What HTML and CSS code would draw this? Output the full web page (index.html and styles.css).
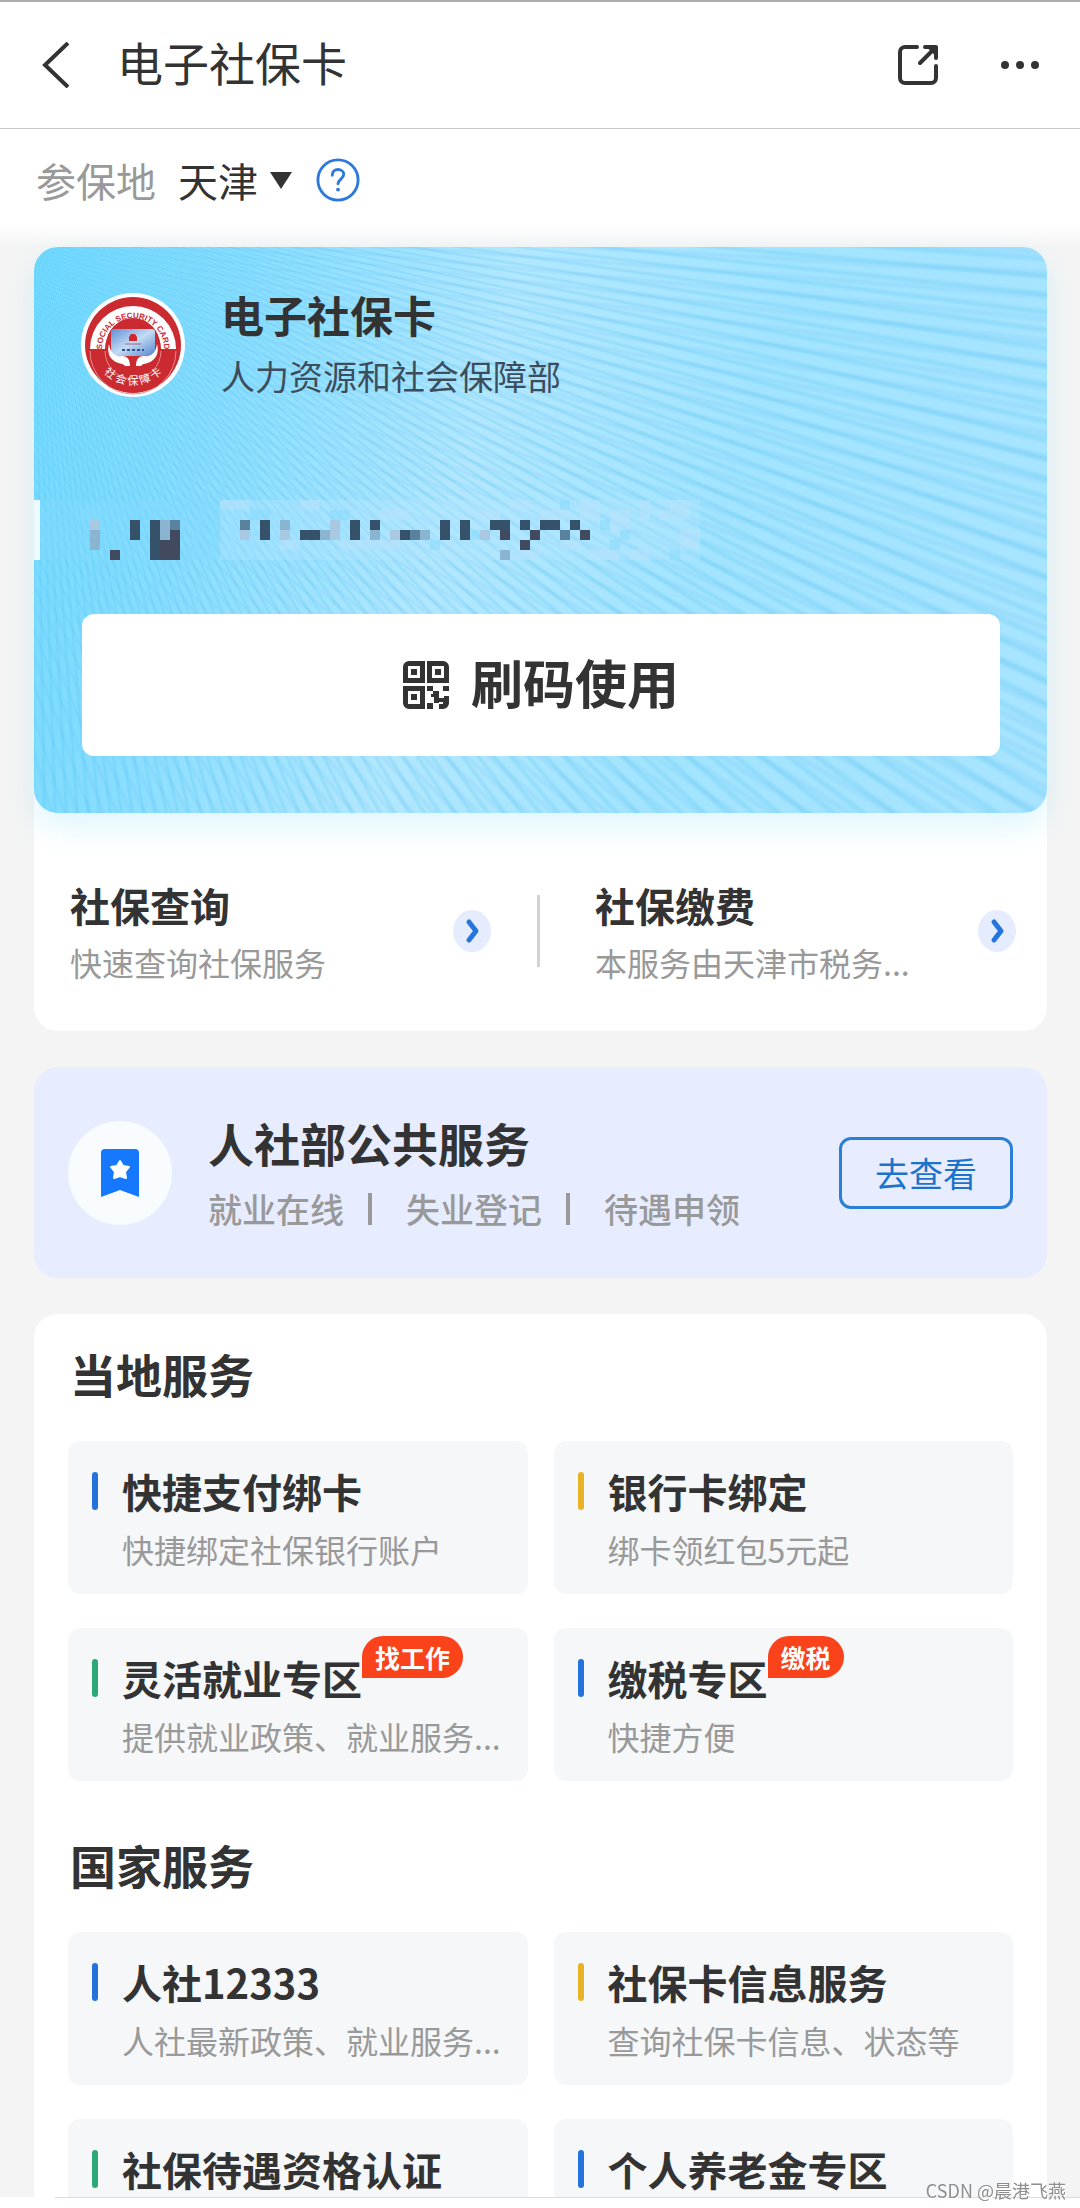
FILE: index.html
```html
<!DOCTYPE html>
<html lang="zh-CN">
<head>
<meta charset="utf-8">
<meta name="viewport" content="width=device-width, initial-scale=1">
<title>电子社保卡</title>
<link rel="stylesheet" href="styles.css">
</head>
<body>
<div class="app">
  <header class="topbar">
    <button class="icon-btn" aria-label="返回">
      <svg width="28" height="46" viewBox="0 0 28 46" fill="none" stroke="#333" stroke-width="4"><path d="M26 1 3 23l23 22"/></svg>
    </button>
    <h1 class="topbar-title">电子社保卡</h1>
    <button class="icon-btn" aria-label="分享">
      <svg width="42" height="42" viewBox="0 0 42 42" fill="none" stroke="#333" stroke-width="4" stroke-linecap="round" stroke-linejoin="round">
        <path d="M20 3H8a5 5 0 0 0-5 5v26a5 5 0 0 0 5 5h26a5 5 0 0 0 5-5V22"/>
        <path d="M28 3h11v11M38 4 23 19"/><path d="M31 3h8v8z" fill="#333" stroke-width="2"/>
      </svg>
    </button>
    <button class="icon-btn more" aria-label="更多">
      <svg width="38" height="8" viewBox="0 0 38 8" fill="#333"><circle cx="4" cy="4" r="4"/><circle cx="19" cy="4" r="4"/><circle cx="34" cy="4" r="4"/></svg>
    </button>
  </header>

  <main class="content">
    <div class="region">
      <label class="region-label" for="region">参保地</label>
      <select class="region-select" id="region"><option>天津</option></select>
      <svg class="region-caret" width="22" height="17" viewBox="0 0 22 17" fill="#333"><path d="M0 0h22L11 17z"/></svg>
      <button class="icon-btn" aria-label="帮助">
        <svg width="44" height="44" viewBox="0 0 46 46" fill="none" stroke="#2d78dc" stroke-width="3" stroke-linecap="round"><circle cx="23" cy="23" r="21"/><path d="M17 18c0-4 3-6 6-6s6 2 6 5c0 5-6 5-6 10"/><circle cx="23" cy="33" r="2" fill="#2d78dc" stroke="none"/></svg>
      </button>
    </div>

    <div class="stack">
      <section class="panel">
        <div class="card">
          <div class="card-head">
            <svg class="card-logo" width="104" height="104" viewBox="-52 -52 104 104">
              <defs>
                <path id="arc-top" d="M-31 4A31 31 0 0 1 31 4"/>
                <path id="arc-bottom" d="M-40 8A41 41 0 0 0 40 8"/>
                <linearGradient id="chip" x1="0" y1="0" x2="1" y2="1"><stop offset="0" stop-color="#5e8fd4"/><stop offset=".5" stop-color="#c3dcf5"/><stop offset="1" stop-color="#5583cb"/></linearGradient>
              </defs>
              <circle r="52" fill="#fff"/><circle r="48" fill="#cb2a31"/>
              <path d="M-43 4A43 43 0 0 1 43 4H28A28 28 0 0 0-28 4z" fill="#fff"/>
              <circle r="27" fill="#cb2a31"/>
              <path d="M-43 6A43 43 0 0 0 43 6M-28 6A28 28 0 0 0 28 6" fill="none" stroke="#e58b8c" stroke-width="1"/>
              <rect x="-22" y="-16" width="44" height="27" rx="3" fill="url(#chip)"/>
              <path d="M-4-4v-4l2-3h4l2 3v4z" fill="#d3262d"/>
              <path d="M-8-1H8" stroke="#a6627a"/><path d="M-11 5H11" stroke="#2e538f" stroke-width="2" stroke-dasharray="3 2"/>
              <path d="M-24-1c1 8 5 13 13 12 5 0 8 3 8 10h-5c-2-3-8-2-12-6-4-3-6-9-4-16zM24-1c-1 8-5 13-13 12-5 0-8 3-8 10h5c2-3 8-2 12-6 4-3 6-9 4-16z" fill="#fff"/>
              <text class="logo-en"><textPath href="#arc-top" startOffset="50%">SOCIAL SECURITY CARD</textPath></text>
              <text class="logo-cn"><textPath href="#arc-bottom" startOffset="50%">社 会 保 障 卡</textPath></text>
            </svg>
            <div class="card-names">
              <h2 class="card-title">电子社保卡</h2>
              <p class="card-org">人力资源和社会保障部</p>
            </div>
          </div>

          <svg class="mask" width="690" height="60" viewBox="0 0 690 60" shape-rendering="crispEdges" aria-hidden="true">
            <rect width="6" height="60" fill="#eafaff"/>
            <path fill="#b4e4ff" opacity=".35" d="M186 0h480v60h-480z"/>
            <path fill="#84d9ff" opacity=".35" d="M6 0h180v60h-180z"/>
            <path fill="#b9e2fb" opacity=".5" d="M186 0h30v10h-30zM266 0h20v10h-20zM346 10h30v10h-30zM446 10h20v10h-20zM476 0h20v10h-20zM506 10h30v10h-30zM546 0h20v20h-20zM576 10h20v20h-20zM606 0h10v20h-10zM626 10h30v10h-30zM646 30h20v20h-20zM526 40h20v10h-20zM556 50h30v10h-30zM466 50h40v10h-40zM306 40h60v10h-60zM246 40h20v10h-20zM596 50h20v10h-20zM636 0h20v10h-20z"/>
            <path fill="#86dafb" opacity=".5" d="M46 10h20v10h-20zM106 0h30v10h-30zM216 10h20v10h-20zM296 10h20v10h-20zM396 40h10v10h-10zM436 30h10v10h-10zM566 20h10v10h-10zM586 30h10v10h-10zM576 40h10v10h-10zM526 0h10v10h-10zM636 50h10v10h-10z"/>
            <path fill="#a9c9e3" d="M56 20h10v10h-10zM206 30h10v10h-10zM246 30h10v10h-10zM296 20h10v20h-10zM356 30h10v10h-10zM446 30h10v10h-10z"/>
            <path fill="#8ab5d0" d="M56 30h10v20h-10zM126 20h10v20h-10zM246 20h10v10h-10zM286 30h10v10h-10zM336 30h10v10h-10zM386 30h10v10h-10zM466 50h10v10h-10z"/>
            <path fill="#5b829c" d="M136 20h10v10h-10zM206 20h10v10h-10zM376 30h10v10h-10zM526 30h10v10h-10z"/>
            <path fill="#35526a" d="M96 20h10v20h-10zM116 20h10v40h-10zM226 20h10v20h-10zM266 30h20v10h-20zM316 20h10v20h-10zM336 20h10v10h-10zM366 30h10v10h-10zM406 20h10v20h-10zM426 20h10v20h-10zM456 20h20v10h-20zM486 20h10v10h-10zM506 20h20v10h-20zM536 20h10v10h-10z"/>
            <path fill="#414a5e" d="M76 50h10v10h-10zM126 40h20v20h-20zM136 30h10v10h-10zM466 30h10v10h-10zM496 30h10v10h-10zM486 40h10v10h-10zM546 30h10v10h-10z"/>
          </svg>

          <button class="scan">
            <svg width="46" height="48" viewBox="0 0 46 48" fill="#333">
              <path fill-rule="evenodd" d="M6 0h16v22H0V6a6 6 0 0 1 6-6zM5 5v12h12V5zM24 0h16a6 6 0 0 1 6 6v16H24zM29 5v12h12V5zM0 25h22v23H6a6 6 0 0 1-6-6zM5 30v13h12V30z"/>
              <path d="M8 8h6v6H8zM32 8h6v6h-6zM8 33h6v6H8zM24 25h6v5h-6zM30 30h6v12h-5v-6h-3v-3h2zM40 25h6v5h-6zM36 37h5v-2h5v7a6 6 0 0 1-6 6h-4v-5h4v-2h-4zM24 42h6v6h-6z"/>
            </svg>
            <span class="scan-label">刷码使用</span>
          </button>
        </div>

        <nav class="quick">
          <a class="quick-link" href="#query">
            <span class="texts"><strong class="item-title">社保查询</strong><span class="item-sub">快速查询社保服务</span></span>
            <svg width="40" height="42" viewBox="0 0 40 42"><ellipse cx="20" cy="21" rx="19" ry="21" fill="#e5ecfd"/><path d="m17 12 7 9-7 9" fill="none" stroke="#2575e0" stroke-width="5" stroke-linecap="round" stroke-linejoin="round"/></svg>
          </a>
          <span class="quick-divider"></span>
          <a class="quick-link" href="#pay">
            <span class="texts"><strong class="item-title">社保缴费</strong><span class="item-sub">本服务由天津市税务...</span></span>
            <svg width="40" height="42" viewBox="0 0 40 42"><ellipse cx="20" cy="21" rx="19" ry="21" fill="#e5ecfd"/><path d="m17 12 7 9-7 9" fill="none" stroke="#2575e0" stroke-width="5" stroke-linecap="round" stroke-linejoin="round"/></svg>
          </a>
        </nav>
      </section>

      <section class="banner">
        <svg width="104" height="104" viewBox="0 0 104 104"><circle cx="52" cy="52" r="52" fill="#f8fcff"/><path d="M37 28h30a4 4 0 0 1 4 4v44l-19-7-19 7V32a4 4 0 0 1 4-4z" fill="#1677ff"/><path d="m52 40 3 5 6 1-4 5 1 6-6-2-6 2 1-6-4-5 6-1z" fill="#fff" stroke="#fff" stroke-width="2" stroke-linejoin="round"/></svg>
        <div class="banner-text">
          <h2 class="section-title">人社部公共服务</h2>
          <p class="banner-tags"><span>就业在线</span><span>失业登记</span><span>待遇申领</span></p>
        </div>
        <button class="outline-btn">去查看</button>
      </section>

      <section class="panel services">
        <h2 class="section-title">当地服务</h2>
        <div class="tiles">
          <a class="tile blue" href="#quickpay"><strong class="item-title">快捷支付绑卡</strong><span class="item-sub">快捷绑定社保银行账户</span></a>
          <a class="tile yellow" href="#bankcard"><strong class="item-title">银行卡绑定</strong><span class="item-sub">绑卡领红包5元起</span></a>
          <a class="tile green" href="#jobs"><strong class="item-title">灵活就业专区<em class="badge">找工作</em></strong><span class="item-sub">提供就业政策、就业服务...</span></a>
          <a class="tile blue" href="#tax"><strong class="item-title">缴税专区<em class="badge">缴税</em></strong><span class="item-sub">快捷方便</span></a>
        </div>
        <h2 class="section-title">国家服务</h2>
        <div class="tiles">
          <a class="tile blue" href="#12333"><strong class="item-title">人社12333</strong><span class="item-sub">人社最新政策、就业服务...</span></a>
          <a class="tile yellow" href="#cardinfo"><strong class="item-title">社保卡信息服务</strong><span class="item-sub">查询社保卡信息、状态等</span></a>
          <a class="tile green" href="#verify"><strong class="item-title">社保待遇资格认证</strong></a>
          <a class="tile blue" href="#pension"><strong class="item-title">个人养老金专区</strong></a>
        </div>
      </section>
    </div>
  </main>
  <footer class="bottom-edge"></footer>
</div>
<span class="watermark">CSDN @晨港飞燕</span>
</body>
</html>
```
FILE: styles.css
```css
* {
  box-sizing: border-box;
  margin: 0;
  padding: 0;
}

body {
  font-family: "Noto Sans CJK SC", "Noto Sans", sans-serif;
  color: #333;
  background: #fff;
}

button,
select {
  font: inherit;
  color: inherit;
  border: 0;
  background: none;
}

a {
  color: inherit;
  text-decoration: none;
}

svg {
  display: block;
  flex: none;
}

.app {
  display: flex;
  flex-direction: column;
  height: 100vh;
}

.topbar {
  flex: none;
  display: flex;
  align-items: center;
  height: 129px;
  padding: 0 41px 0 42px;
  border-top: 2px solid #adadad;
  border-bottom: 1px solid #c6c6c6;
}

.topbar-title {
  flex: 1;
  margin-left: 47px;
  padding-bottom: 8px;
  font-size: 46px;
  line-height: 60px;
  font-weight: 400;
}

.icon-btn {
  display: flex;
}

.more {
  margin-left: 62px;
}

.content {
  flex: 1;
  min-height: 0;
  overflow-y: auto;
  scrollbar-width: none;
  background: #f4f4f4;
}

.region {
  display: flex;
  align-items: center;
  height: 118px;
  padding: 0 36px 16px;
  font-size: 40px;
  line-height: 56px;
  background: linear-gradient(#fff 96px, #f4f4f4);
}

.region-label {
  color: #999;
}

.region-select {
  appearance: none;
  margin-left: 22px;
}

.region-caret {
  margin: 0 24px 0 12px;
}

.stack {
  display: flex;
  flex-direction: column;
  gap: 36px;
  padding: 0 33px 36px 34px;
}

.panel {
  border-radius: 24px;
  background: #fff;
}

.card {
  padding: 38px 0 57px;
  border-radius: 24px;
  background:
    repeating-conic-gradient(from 80deg at 0 -60px, rgba(70, 190, 235, 0.2) 0 0.1deg, transparent 0.3deg 0.8deg, rgba(70, 190, 235, 0.2) 1deg),
    repeating-conic-gradient(from 80deg at -160px -40px, rgba(80, 175, 235, 0.12) 0 0.1deg, transparent 0.3deg 0.9deg, rgba(80, 175, 235, 0.12) 1.1deg),
    linear-gradient(105deg, #70d9ff, #86ddff 18%, #b2e7ff 42%, #a2e4ff 65%, #a8e4ff);
  box-shadow: 0 14px 30px rgba(90, 210, 245, 0.2);
}

.card-head {
  display: flex;
  align-items: flex-start;
  gap: 36px;
  padding: 0 47px;
}

.card-logo {
  margin-top: 8px;
}

.logo-en,
.logo-cn {
  text-anchor: middle;
}

.logo-en {
  font-family: "Liberation Sans", sans-serif;
  font-size: 8px;
  font-weight: 700;
  fill: #cb2a31;
}

.logo-cn {
  font-size: 11px;
  fill: #fff;
}

.card-names {
  display: grid;
  gap: 8px;
}

.card-title {
  font-size: 43px;
  line-height: 58px;
  font-weight: 700;
}

.card-org {
  font-size: 34px;
  line-height: 50px;
  color: #3c4d5e;
}

.mask {
  margin: 99px 0 54px;
}

.scan {
  display: flex;
  align-items: center;
  justify-content: center;
  gap: 22px;
  width: calc(100% - 95px);
  height: 142px;
  margin: 0 47px 0 48px;
  border-radius: 12px;
  background: #fff;
  font-size: 52px;
  line-height: 72px;
  font-weight: 700;
}

.scan-label {
  padding-bottom: 6px;
}

.quick {
  display: flex;
  align-items: center;
  padding: 64px 30px 46px 36px;
}

.quick-link {
  flex: 1;
  display: flex;
  align-items: center;
  justify-content: space-between;
}

.quick-divider {
  width: 3px;
  height: 72px;
  margin: 0 55px 0 45px;
  background: #d2d2d2;
}

.texts {
  display: grid;
  gap: 6px;
}

.item-title {
  justify-self: start;
  position: relative;
  font-size: 40px;
  line-height: 56px;
  font-weight: 700;
  white-space: nowrap;
}

.item-sub {
  font-size: 32px;
  line-height: 46px;
  color: #999;
  white-space: nowrap;
}

.banner {
  display: flex;
  align-items: center;
  height: 211px;
  padding: 0 34px;
  border-radius: 24px;
  background: #e7edff;
}

.banner-text {
  flex: 1;
  margin-left: 36px;
}

.section-title {
  font-size: 46px;
  line-height: 60px;
  font-weight: 700;
}

.banner-tags {
  display: flex;
  margin-top: 12px;
  font-size: 34px;
  line-height: 50px;
  font-weight: 500;
  color: #999;
}

.banner-tags span + span {
  display: flex;
  align-items: center;
}

.banner-tags span + span::before {
  content: "";
  width: 4px;
  height: 32px;
  margin: 0 34px 0 24px;
  background: #999;
}

.outline-btn {
  width: 174px;
  height: 72px;
  border: 3px solid #2a7fd6;
  border-radius: 12px;
  font-size: 34px;
  line-height: 50px;
  color: #1b73cd;
}

.services {
  padding: 29px 34px 36px;
}

.services .section-title {
  margin: 0 2px 38px;
}

.services .tiles + .section-title {
  margin-top: 53px;
}

.tiles {
  display: grid;
  grid-template-columns: 1fr 1fr;
  gap: 34px 26px;
}

.tile {
  display: grid;
  grid-template-columns: 6px 1fr;
  grid-template-rows: 56px 46px;
  gap: 7px 24px;
  min-height: 153px;
  padding: 22px 16px 22px 24px;
  border-radius: 12px;
  background: #f5f7f9;
}

.tile::before {
  content: "";
  align-self: center;
  height: 38px;
  border-radius: 3px;
}

.tile .item-sub {
  grid-column: 2;
}

.blue::before {
  background: #2472dc;
}

.yellow::before {
  background: #e8b425;
}

.green::before {
  background: #2fa878;
}

.badge {
  position: absolute;
  left: 100%;
  bottom: 50%;
  padding: 0 13px;
  border-radius: 21px 21px 21px 0;
  background: #fb431b;
  font-size: 25px;
  line-height: 42px;
  font-style: normal;
  font-weight: 700;
  color: #fff;
}

.bottom-edge {
  flex: none;
  height: 11px;
  margin-left: 55px;
  border-top: 1px solid #dcdcdc;
}

.watermark {
  position: fixed;
  right: 14px;
  bottom: 6px;
  font-size: 18px;
  line-height: 24px;
  color: #8e8e8e;
  text-shadow: 1px 1px 0 #fff;
}
```
